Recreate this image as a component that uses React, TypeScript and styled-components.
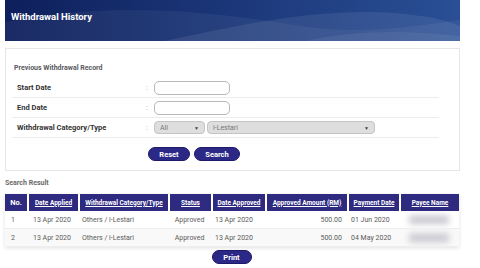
import React from 'react'
import styled, { createGlobalStyle } from 'styled-components'

const GlobalStyle = createGlobalStyle`
  body {
    margin: 0;
    background: #ffffff;
    font-family: Roboto, "Liberation Sans", sans-serif;
    -webkit-font-smoothing: antialiased;
  }
`

const Page = styled.div`
  width: 455px;
  padding-left: 5px;
`

const Banner = styled.header`
  position: relative;
  box-sizing: border-box;
  height: 41px;
  padding: 11px 0 0 6px;
  overflow: hidden;
  background: linear-gradient(90deg, #0e1f5c 0%, #1a3576 45%, #2a4f95 100%);
`

const Waves = styled.svg`
  position: absolute;
  left: 0;
  top: 0;
  width: 100%;
  height: 100%;
`

const Title = styled.h1`
  position: relative;
  margin: 0;
  font-size: 9.5px;
  font-weight: bold;
  color: #ffffff;
`

const Card = styled.section`
  margin-top: 7px;
  height: 121px;
  border: 1px solid #e6e6e6;
  padding: 0 6px;
`

const CardTitle = styled.h2`
  margin: 15px 0 0 2px;
  height: 14px;
  font-size: 7px;
  font-weight: bold;
  color: #5a5a62;
`

const FormRow = styled.div`
  display: flex;
  align-items: center;
  width: 427px;
  height: 19px;
  border-bottom: 1px solid #ececec;
`

const Label = styled.div`
  width: 129px;
  padding-left: 5px;
  font-size: 7.5px;
  font-weight: bold;
  color: #333333;
`

const Colon = styled.div`
  width: 8px;
  font-size: 7px;
  color: #999999;
`

const Input = styled.div`
  width: 74px;
  height: 12px;
  border: 1px solid #b9b9b9;
  border-radius: 5px;
  background: #ffffff;
`

const Select = styled.div<{ $w: number }>`
  display: flex;
  align-items: center;
  justify-content: space-between;
  box-sizing: border-box;
  width: ${p => p.$w}px;
  height: 13px;
  margin-right: 2px;
  padding: 0 5px 0 5px;
  border: 1px solid #c4c4c4;
  border-radius: 4px;
  background: #dedede;
  font-size: 7px;
  color: #777777;
`

const Caret = styled.span`
  font-size: 5px;
  color: #444444;
`

const ButtonRow = styled.div<{ $left: number }>`
  display: flex;
  gap: 4px;
  margin-top: 9px;
  padding-left: ${p => p.$left}px;
`

const Pill = styled.button<{ $w: number }>`
  width: ${p => p.$w}px;
  height: 14px;
  padding: 0;
  border: 1px solid #1d1a6a;
  border-radius: 7px;
  background: #2c2886;
  font-family: Roboto, "Liberation Sans", sans-serif;
  font-size: 7.5px;
  font-weight: bold;
  color: #ffffff;
`

const SectionTitle = styled.h3`
  margin: 8px 0 0 0;
  height: 15px;
  font-size: 7px;
  font-weight: bold;
  color: #6a6a6a;
`

const Table = styled.table`
  width: 454px;
  border-collapse: separate;
  border-spacing: 0;
  box-shadow: 0 1px 4px rgba(0, 0, 0, 0.12);
  table-layout: fixed;
`

const Th = styled.th`
  box-sizing: border-box;
  height: 17px;
  padding: 0;
  border-left: 2px solid #ffffff;
  background: #2e2a80;
  font-size: 6.5px;
  font-weight: bold;
  color: #ffffff;
  text-decoration: underline;
  text-align: center;
  white-space: nowrap;
  &:first-child {
    border-left: none;
    text-decoration: none;
    font-size: 7.5px;
  }
`

const Col = styled.col<{ $w: number }>`
  width: ${p => p.$w}px;
`

const Tr = styled.tr<{ $alt?: boolean }>`
  background: ${p => (p.$alt ? '#f9f9f9' : '#ffffff')};
`

const Td = styled.td<{ $align?: string; $pad?: number }>`
  height: 17px;
  padding: 0 ${p => p.$pad ?? 4}px;
  border-bottom: 1px solid #eeeeee;
  font-size: 7px;
  color: #5a5a5a;
  text-align: ${p => p.$align ?? 'left'};
  white-space: nowrap;
  overflow: hidden;
`

const Blurred = styled.span`
  display: inline-block;
  filter: blur(3px);
  color: #c8c8d0;
`

const PrintRow = styled.div`
  display: flex;
  justify-content: center;
  margin-top: 3px;
  padding-right: 2px;
`

const columns = [
  { t: 'No.', w: 22 },
  { t: 'Date Applied', w: 51 },
  { t: 'Withdrawal Category/Type', w: 90 },
  { t: 'Status', w: 43 },
  { t: 'Date Approved', w: 54 },
  { t: 'Approved Amount (RM)', w: 82 },
  { t: 'Payment Date', w: 52 },
  { t: 'Payee Name', w: 60 },
]

const rows = [
  { no: '1', applied: '13 Apr 2020', type: 'Others / i-Lestari', status: 'Approved', approved: '13 Apr 2020', amount: '500.00', paid: '01 Jun 2020' },
  { no: '2', applied: '13 Apr 2020', type: 'Others / i-Lestari', status: 'Approved', approved: '13 Apr 2020', amount: '500.00', paid: '04 May 2020' },
]

export default function App() {
  return (
    <Page>
      <GlobalStyle />
      <Banner>
        <Waves viewBox="0 0 455 41" preserveAspectRatio="none">
          <path d="M0 22 C90 4 180 8 270 22 C330 32 360 34 455 20 L455 41 L0 41 Z" fill="#ffffff" opacity="0.05" />
          <path d="M160 41 C240 24 320 6 400 14 C430 17 445 22 455 26 L455 41 Z" fill="#ffffff" opacity="0.08" />
          <path d="M300 41 C350 30 400 30 455 36 L455 41 Z" fill="#ffffff" opacity="0.06" />
        </Waves>
        <Title>Withdrawal History</Title>
      </Banner>

      <Card>
        <CardTitle>Previous Withdrawal Record</CardTitle>
        <FormRow>
          <Label>Start Date</Label>
          <Colon>:</Colon>
          <Input />
        </FormRow>
        <FormRow>
          <Label>End Date</Label>
          <Colon>:</Colon>
          <Input />
        </FormRow>
        <FormRow>
          <Label>Withdrawal Category/Type</Label>
          <Colon>:</Colon>
          <Select $w={51}>
            All <Caret>▼</Caret>
          </Select>
          <Select $w={168}>
            i-Lestari <Caret>▼</Caret>
          </Select>
        </FormRow>
        <ButtonRow $left={136}>
          <Pill $w={42}>Reset</Pill>
          <Pill $w={46}>Search</Pill>
        </ButtonRow>
      </Card>

      <SectionTitle>Search Result</SectionTitle>
      <Table>
        <colgroup>
          {columns.map(c => (
            <Col key={c.t} $w={c.w} />
          ))}
        </colgroup>
        <thead>
          <tr>
            {columns.map(c => (
              <Th key={c.t}>{c.t}</Th>
            ))}
          </tr>
        </thead>
        <tbody>
          {rows.map((r, i) => (
            <Tr key={r.no} $alt={i % 2 === 1}>
              <Td $pad={6}>{r.no}</Td>
              <Td $pad={6}>{r.applied}</Td>
              <Td>{r.type}</Td>
              <Td $align="center">{r.status}</Td>
              <Td>{r.approved}</Td>
              <Td $align="right" $pad={5}>{r.amount}</Td>
              <Td>{r.paid}</Td>
              <Td $align="center"><Blurred>████████</Blurred></Td>
            </Tr>
          ))}
        </tbody>
      </Table>
      <PrintRow>
        <Pill $w={40}>Print</Pill>
      </PrintRow>
    </Page>
  )
}
